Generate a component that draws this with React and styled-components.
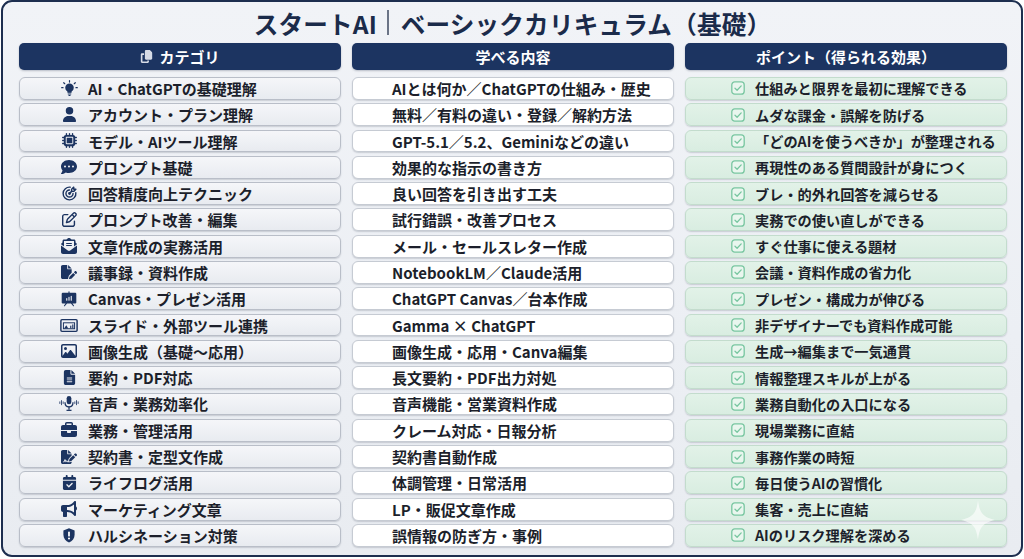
import React from "react";
import styled, { createGlobalStyle } from "styled-components";
import {
  FaUser,
  FaMicrochip,
  FaCommentDots,
  FaRegPenToSquare,
  FaEnvelopeOpenText,
  FaFilePen,
  FaRegImage,
  FaFileLines,
  FaBriefcase,
  FaFileSignature,
  FaCalendarCheck,
  FaBullhorn,
  FaCopy,
} from "react-icons/fa6";
import { TbTargetArrow } from "react-icons/tb";
import { PiPresentationChartFill } from "react-icons/pi";

const GlobalStyle = createGlobalStyle`
  html, body {
    margin: 0;
    padding: 0;
    background: #ffffff;
  }
  body {
    font-family: "Noto Sans CJK JP", "Noto Sans", sans-serif;
  }
`;

const NAVY = "#1c3461";

const Bulb = () => (
  <svg width="17" height="17" viewBox="0 0 20 20" fill="none">
    <g stroke={NAVY} strokeWidth="1.4" strokeLinecap="round">
      <line x1="10" y1="0.8" x2="10" y2="2.4" />
      <line x1="3.2" y1="3.2" x2="4.4" y2="4.4" />
      <line x1="16.8" y1="3.2" x2="15.6" y2="4.4" />
      <line x1="0.8" y1="9" x2="2.4" y2="9" />
      <line x1="17.6" y1="9" x2="19.2" y2="9" />
    </g>
    <circle cx="10" cy="9" r="5" fill={NAVY} />
    <rect x="7.6" y="12.5" width="4.8" height="2.6" fill={NAVY} />
    <rect x="7.8" y="15.8" width="4.4" height="1.3" rx="0.5" fill={NAVY} />
    <rect x="8.6" y="17.6" width="2.8" height="1.2" rx="0.5" fill={NAVY} />
  </svg>
);

const Slides = () => (
  <svg width="18" height="15" viewBox="0 0 20 16" fill="none">
    <rect x="1" y="1.5" width="18" height="13" rx="1.2" stroke={NAVY} strokeWidth="1.6" />
    <rect x="3.8" y="5" width="12.4" height="6.6" stroke={NAVY} strokeWidth="1.1" />
    <path d="M4.5 11.2 L7 7.6 L9.2 11.2 Z" fill={NAVY} />
    <rect x="11.3" y="8.2" width="1.3" height="3" fill={NAVY} />
    <rect x="13.6" y="6.8" width="1.3" height="4.4" fill={NAVY} />
  </svg>
);

const MicWaves = () => (
  <svg width="20" height="17" viewBox="0 0 24 20" fill="none">
    <rect x="9.2" y="1" width="5.6" height="10" rx="2.8" fill={NAVY} />
    <path d="M7.2 8.5 C7.2 12 9.2 14 12 14 C14.8 14 16.8 12 16.8 8.5" stroke={NAVY} strokeWidth="1.5" />
    <line x1="12" y1="14" x2="12" y2="17.5" stroke={NAVY} strokeWidth="1.5" />
    <line x1="9" y1="18.2" x2="15" y2="18.2" stroke={NAVY} strokeWidth="1.5" />
    <g stroke={NAVY} strokeWidth="1" strokeLinecap="round">
      <line x1="1" y1="8" x2="1" y2="10" />
      <line x1="3" y1="6.5" x2="3" y2="11.5" />
      <line x1="5" y1="8" x2="5" y2="10" />
      <line x1="19" y1="8" x2="19" y2="10" />
      <line x1="21" y1="6.5" x2="21" y2="11.5" />
      <line x1="23" y1="8" x2="23" y2="10" />
    </g>
  </svg>
);

const ShieldAlert = () => (
  <svg width="16" height="17" viewBox="0 0 20 20">
    <path
      d="M10 1 L17 3.8 V9 C17 13.6 14.2 16.8 10 18.6 C5.8 16.8 3 13.6 3 9 V3.8 Z"
      fill={NAVY}
    />
    <rect x="8.9" y="5" width="2.2" height="6.4" rx="1.1" fill="#fff" />
    <circle cx="10" cy="13.8" r="1.3" fill="#fff" />
  </svg>
);

const CheckBox = () => (
  <svg width="14" height="14" viewBox="0 0 14 14" fill="none">
    <rect x="0.8" y="0.8" width="12.4" height="12.4" rx="3" fill="#e9f6ee" stroke="#78c6a0" strokeWidth="1.3" />
    <path d="M4 7.2 L6.1 9.2 L10.2 4.9" stroke="#78c6a0" strokeWidth="1.3" strokeLinecap="round" strokeLinejoin="round" />
  </svg>
);

const ic = (C, size = 16) => <C size={size} color={NAVY} />;

const rows = [
  [<Bulb />, "AI・ChatGPTの基礎理解", "AIとは何か／ChatGPTの仕組み・歴史", "仕組みと限界を最初に理解できる"],
  [ic(FaUser, 15), "アカウント・プラン理解", "無料／有料の違い・登録／解約方法", "ムダな課金・誤解を防げる"],
  [ic(FaMicrochip, 15), "モデル・AIツール理解", "GPT-5.1／5.2、Geminiなどの違い", "「どのAIを使うべきか」が整理される"],
  [ic(FaCommentDots, 16), "プロンプト基礎", "効果的な指示の書き方", "再現性のある質問設計が身につく"],
  [ic(TbTargetArrow, 17), "回答精度向上テクニック", "良い回答を引き出す工夫", "ブレ・的外れ回答を減らせる"],
  [ic(FaRegPenToSquare, 15), "プロンプト改善・編集", "試行錯誤・改善プロセス", "実務での使い直しができる"],
  [ic(FaEnvelopeOpenText, 16), "文章作成の実務活用", "メール・セールスレター作成", "すぐ仕事に使える題材"],
  [ic(FaFilePen, 16), "議事録・資料作成", "NotebookLM／Claude活用", "会議・資料作成の省力化"],
  [ic(PiPresentationChartFill, 18), "Canvas・プレゼン活用", "ChatGPT Canvas／台本作成", "プレゼン・構成力が伸びる"],
  [<Slides />, "スライド・外部ツール連携", "Gamma × ChatGPT", "非デザイナーでも資料作成可能"],
  [ic(FaRegImage, 16), "画像生成（基礎〜応用）", "画像生成・応用・Canva編集", "生成→編集まで一気通貫"],
  [ic(FaFileLines, 15), "要約・PDF対応", "長文要約・PDF出力対処", "情報整理スキルが上がる"],
  [<MicWaves />, "音声・業務効率化", "音声機能・営業資料作成", "業務自動化の入口になる"],
  [ic(FaBriefcase, 16), "業務・管理活用", "クレーム対応・日報分析", "現場業務に直結"],
  [ic(FaFileSignature, 16), "契約書・定型文作成", "契約書自動作成", "事務作業の時短"],
  [ic(FaCalendarCheck, 15), "ライフログ活用", "体調管理・日常活用", "毎日使うAIの習慣化"],
  [ic(FaBullhorn, 16), "マーケティング文章", "LP・販促文章作成", "集客・売上に直結"],
  [<ShieldAlert />, "ハルシネーション対策", "誤情報の防ぎ方・事例", "AIのリスク理解を深める"],
];

const Frame = styled.div`
  position: relative;
  box-sizing: border-box;
  width: 1022px;
  height: 557px;
  margin: 0 1px;
  border: 2px solid #1d2e4f;
  border-radius: 11px;
  background: linear-gradient(180deg, #f1f3f7 0%, #eceff4 60%, #e9ecf1 100%);
  padding: 0 17px 0 16px;
  display: flex;
  flex-direction: column;
  overflow: hidden;
`;

const Title = styled.h1`
  margin: 0;
  height: 41px;
  display: flex;
  align-items: center;
  justify-content: center;
  font-size: 24.6px;
  font-weight: 700;
  color: #1b2b4a;
  letter-spacing: 0.2px;
  padding-left: 2px;
`;

const Divider = styled.span`
  display: inline-block;
  width: 1.5px;
  height: 25px;
  margin: 0 12px 0 10px;
  background: #6b7486;
`;

const Columns = styled.div`
  display: grid;
  grid-template-columns: repeat(3, 322px);
  column-gap: 11px;
`;

const Column = styled.div`
  display: flex;
  flex-direction: column;
  gap: 3.5px;
`;

const HeaderCell = styled.div`
  height: 27px;
  margin-bottom: 3.5px;
  border-radius: 5px;
  background: ${NAVY};
  color: #ffffff;
  font-size: 15px;
  font-weight: 700;
  display: flex;
  align-items: center;
  justify-content: center;
  gap: 6px;
  box-shadow: 0 1px 2px rgba(20, 30, 60, 0.25);
`;

const kinds = {
  cat: {
    bg: "linear-gradient(180deg, #f5f6f9 0%, #e8ebf0 100%)",
    border: "#b9bec8",
    pad: "39px",
    size: "15px",
    gap: "9px",
  },
  learn: {
    bg: "#ffffff",
    border: "#c6cbd3",
    pad: "39px",
    size: "15px",
    gap: "0",
  },
  point: {
    bg: "linear-gradient(180deg, #e2f2e8 0%, #d9ede1 100%)",
    border: "#c3dccd",
    pad: "45px",
    size: "14.2px",
    gap: "10px",
  },
};

const Row = styled.div`
  box-sizing: border-box;
  height: 22.8px;
  border-radius: 6px;
  border: 1px solid ${(p) => kinds[p.$kind].border};
  background: ${(p) => kinds[p.$kind].bg};
  box-shadow: 0 1px 1.5px rgba(30, 40, 60, 0.18);
  display: flex;
  align-items: center;
  padding-left: ${(p) => kinds[p.$kind].pad};
  gap: ${(p) => kinds[p.$kind].gap};
  font-size: ${(p) => kinds[p.$kind].size};
  font-weight: 700;
  color: #1c1f2b;
  white-space: nowrap;
`;

const IconSlot = styled.span`
  width: 20px;
  display: inline-flex;
  align-items: center;
  justify-content: center;
  flex-shrink: 0;
`;

const Sparkle = styled.svg`
  position: absolute;
  right: 26px;
  bottom: 15px;
  opacity: 0.85;
  pointer-events: none;
`;

export default function App() {
  return (
    <>
      <GlobalStyle />
      <Frame>
        <Title>
          スタートAI
          <Divider />
          ベーシックカリキュラム（基礎）
        </Title>
        <Columns>
          <Column>
            <HeaderCell>
              <FaCopy size={13} color="#d6dbe6" />
              カテゴリ
            </HeaderCell>
            {rows.map((r, i) => (
              <Row key={i} $kind="cat">
                <IconSlot>{r[0]}</IconSlot>
                {r[1]}
              </Row>
            ))}
          </Column>
          <Column>
            <HeaderCell>学べる内容</HeaderCell>
            {rows.map((r, i) => (
              <Row key={i} $kind="learn">
                {r[2]}
              </Row>
            ))}
          </Column>
          <Column>
            <HeaderCell>ポイント（得られる効果）</HeaderCell>
            {rows.map((r, i) => (
              <Row key={i} $kind="point">
                <CheckBox />
                {r[3]}
              </Row>
            ))}
          </Column>
        </Columns>
        <Sparkle width="34" height="40" viewBox="0 0 34 40">
          <path
            d="M17 0 C18.5 12 21 17 34 20 C21 23 18.5 28 17 40 C15.5 28 13 23 0 20 C13 17 15.5 12 17 0 Z"
            fill="#ffffff"
            opacity="0.75"
          />
        </Sparkle>
      </Frame>
    </>
  );
}
